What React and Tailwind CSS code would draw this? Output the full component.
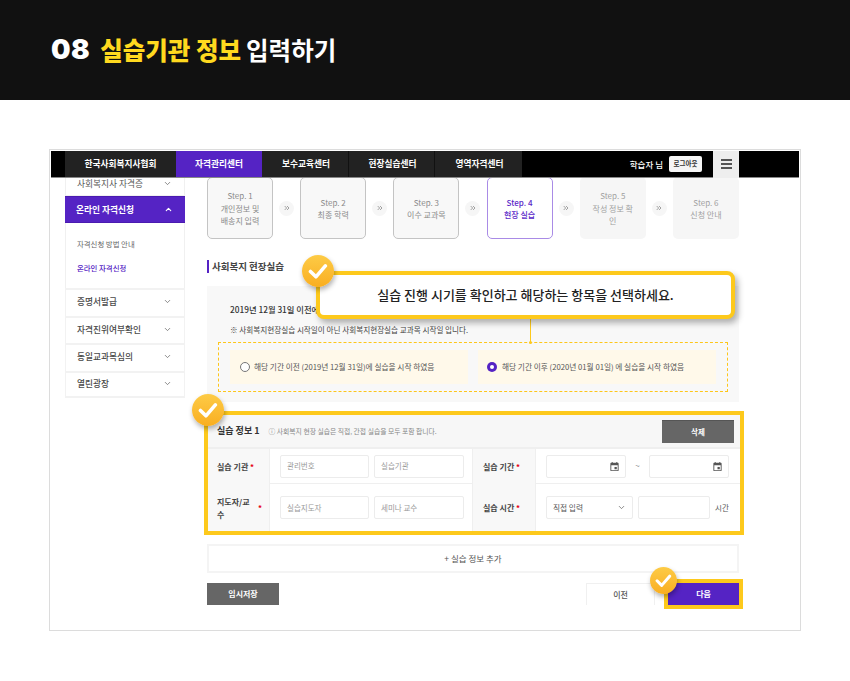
import React from "react";
import { ChevronDown, ChevronUp, ChevronsRight } from "lucide-react";

const navItems = ["한국사회복지사협회", "자격관리센터", "보수교육센터", "현장실습센터", "영역자격센터"];

const steps = [
  { no: "Step. 1", lines: ["개인정보 및", "배송지 입력"], kind: "done" },
  { no: "Step. 2", lines: ["최종 학력"], kind: "done" },
  { no: "Step. 3", lines: ["이수 교과목"], kind: "done" },
  { no: "Step. 4", lines: ["현장 실습"], kind: "active" },
  { no: "Step. 5", lines: ["작성 정보 확", "인"], kind: "todo" },
  { no: "Step. 6", lines: ["신청 안내"], kind: "todo" },
];

const sideItems = ["증명서발급", "자격진위여부확인", "동일교과목심의", "열린광장"];

const CheckBadge = ({ className, size = 32 }) => (
  <div
    className={`absolute z-30 flex items-center justify-center rounded-full bg-gradient-to-b from-[#fdcb45] to-[#f9ae1f] shadow-[1px_3px_5px_rgba(0,0,0,0.3)] ${className}`}
  >
    <svg width={size * 0.62} height={size * 0.62} viewBox="0 0 20 20" fill="none">
      <path d="M2.5 10.5 L8 16 L17.5 5" stroke="#fff" strokeWidth="3.6" strokeLinecap="round" strokeLinejoin="round" />
    </svg>
  </div>
);

const CalendarIcon = () => (
  <svg width="11" height="11" viewBox="0 0 24 24" fill="#555">
    <path d="M19 4h-1V2h-2v2H8V2H6v2H5c-1.1 0-2 .9-2 2v14c0 1.1.9 2 2 2h14c1.1 0 2-.9 2-2V6c0-1.100-.9-2-2-2zm0 16H5V9h14v11z" />
    <rect x="12" y="13" width="5" height="5" />
  </svg>
);

const Field = ({ text, className = "" }) => (
  <div
    className={`h-[23px] border border-[#ececec] rounded-[2px] bg-white flex items-center px-[6px] text-[7.5px] text-[#999] ${className}`}
  >
    {text}
  </div>
);

const Label = ({ children, className = "pl-[9px]" }) => (
  <div className={`bg-[#f8f8f8] border-r border-[#efefef] flex items-center text-[8px] font-bold text-[#444] leading-[13px] ${className}`}>
    {children}
  </div>
);

const Star = ({ className = "" }) => <span className={`text-[#e60012] text-[8px] font-bold ${className}`}>*</span>;

const Step = ({ no, lines, kind }) => {
  const box =
    kind === "done"
      ? "bg-[#f8f8f8] border border-[#c4c4c4] text-[#8a8a8a]"
      : kind === "active"
        ? "bg-white border border-[#a98be6] text-[#5a27c8] font-medium"
        : "bg-[#f6f6f6] text-[#a0a0a0]";
  return (
    <div className={`w-[66px] h-[62px] rounded-[5px] shrink-0 flex flex-col items-center justify-center text-[8px] leading-[12.5px] text-center pt-[2px] ${box}`}>
      <div>{no}</div>
      {lines.map((l) => (
        <div key={l}>{l}</div>
      ))}
    </div>
  );
};

const Arrow = () => (
  <div className="w-[15px] h-[15px] rounded-full bg-[#f6f6f6] flex items-center justify-center shrink-0">
    <ChevronsRight size={8} color="#a0a0a0" strokeWidth={3} />
  </div>
);

export default function App() {
  return (
    <div className="w-[850px] h-[681px] bg-white overflow-hidden font-['Noto_Sans_CJK_KR','Noto_Sans',sans-serif]">
      <header className="h-[100px] bg-[#111111] flex items-center pl-[51px] text-[24.5px] font-bold text-white">
        <span className="font-['Inter',sans-serif] font-black text-[27.5px] tracking-[0.5px] mr-[10px]">08</span>
        <span className="text-[#ffd91f] font-black mr-[5px]">실습기관 정보</span>
        <span>입력하기</span>
      </header>

      <div className="pt-[49px] pl-[49px]">
        <div className="relative w-[752px] h-[482px] border border-[#dcdcdc] p-px overflow-hidden">
          {/* top bar */}
          <div className="relative z-10 h-[27px] bg-black flex items-center text-[8.7px] font-bold text-white border-b border-[#888]">
            <div className="w-[14px]" />
            <div className="w-[111px] h-full bg-[#222] flex items-center justify-center">{navItems[0]}</div>
            <div className="w-[86px] h-full bg-[#5523c4] flex items-center justify-center">{navItems[1]}</div>
            <div className="w-[87px] h-full bg-[#222] border-r border-[#111] flex items-center justify-center pl-[2px]">{navItems[2]}</div>
            <div className="w-[86px] h-full bg-[#222] border-r border-[#111] flex items-center justify-center pl-[2px]">{navItems[3]}</div>
            <div className="w-[87px] h-full bg-[#222] flex items-center justify-center pl-[2px]">{navItems[4]}</div>
            <div className="ml-auto flex items-center h-full mr-[60px]">
              <span className="text-[8.5px] font-medium">학습자 님</span>
              <span className="ml-[6px] w-[33px] h-[16px] bg-[#f5f5f5] rounded-[2px] text-[#333] text-[6.5px] flex items-center justify-center">로그아웃</span>
              <div className="ml-[11px] w-[26px] h-[27px] bg-[#eeeeee] flex flex-col items-center justify-center gap-[2.5px]">
                <div className="w-[11px] h-[1.5px] bg-[#555]" />
                <div className="w-[11px] h-[1.5px] bg-[#555]" />
                <div className="w-[11px] h-[1.5px] bg-[#555]" />
              </div>
            </div>
          </div>

          <div className="flex pl-[14px]">
            {/* side menu */}
            <aside className="w-[120px] shrink-0 -mt-[4px]">
              <div className="border-x border-b border-[#f0f0f0] h-[22px] flex items-center justify-between pl-[11px] pr-[12px] pb-[2px] text-[8.7px] text-[#555]">
                <span>사회복지사 자격증</span>
                <ChevronDown size={9} color="#666" />
              </div>
              <div className="h-[27px] bg-[#5523c4] border-y border-[#4a1bb0] flex items-center justify-between pl-[11px] pr-[12px] text-[8.7px] font-bold text-white">
                <span>온라인 자격신청</span>
                <ChevronUp size={9} color="#fff" strokeWidth={3} />
              </div>
              <div className="h-[65px] border-x border-[#f0f0f0] flex flex-col justify-center gap-[13px] pl-[11px] text-[7.4px]">
                <div className="text-[#666]">자격신청 방법 안내</div>
                <div className="text-[#5523c4] font-medium">온라인 자격신청</div>
              </div>
              {sideItems.map((s) => (
                <div
                  key={s}
                  className="h-[27.500px] border-x border-t-2 border-[#f2f2f2] last:border-b-2 flex items-center justify-between pl-[11px] pr-[12px] pb-[2px] text-[8.700px] font-medium text-[#4a4a4a]"
                >
                  <span>{s}</span>
                  <ChevronDown size={9} color="#666" />
                </div>
              ))}
            </aside>

            {/* main column */}
            <main className="ml-[22px] w-[532px] shrink-0">
              <div className="flex items-center justify-between -mt-[1px]">
                {steps.map((s, i) => (
                  <React.Fragment key={s.no}>
                    <Step {...s} />
                    {i < steps.length - 1 && <Arrow />}
                  </React.Fragment>
                ))}
              </div>

              <div className="mt-[21px] h-[13px] flex items-center border-l-2 border-[#5523c4] pl-[3px] text-[9.500px] font-bold text-[#444] leading-none">
                사회복지 현장실습
              </div>

              <div className="mt-[13px] h-[116px] bg-[#f8f8f8] px-[11px] pt-[16px]">
                <div className="pl-[12px] text-[8.300px] font-medium text-[#333] leading-[14px]">2019년 12월 31일 이전에 현장실습을 시작하셨나요?</div>
                <div className="pl-[12px] mt-[7px] text-[7.600px] text-[#444] leading-[14px]">※ 사회복지현장실습 시작일이 아닌 사회복지현장실습 교과목 시작일 입니다.</div>
                <div className="mt-[5px] h-[50px] border border-dashed border-[#fdc61a] flex items-center gap-[10px] px-[11px]">
                  <div className="w-[238px] h-[34px] bg-[#fff9ea] flex items-center pl-[10px] text-[7.700px] text-[#555]">
                    <span className="w-[10px] h-[10px] rounded-full border border-[#777] bg-white mr-[4px] shrink-0" />
                    해당 기간 이전 (2019년 12월 31일)에 실습을 시작 하였음
                  </div>
                  <div className="w-[238px] h-[34px] bg-[#fff9ea] flex items-center pl-[9px] text-[7.700px] text-[#555]">
                    <span className="w-[10px] h-[10px] rounded-full bg-[#5523c4] mr-[5px] shrink-0 flex items-center justify-center">
                      <span className="w-[4px] h-[4px] rounded-full bg-white" />
                    </span>
                    해당 기간 이후 (2020년 01월 01일) 에 실습을 시작 하였음
                  </div>
                </div>
              </div>

              {/* internship info */}
              <div className="mt-[9px] -ml-[3px] w-[540px] h-[124px] border-4 border-[#fdc91c] bg-white">
                <div className="h-[34px] bg-[#f7f7f7] border-b-2 border-[#efefef] flex items-center pl-[9px] pr-[6px]">
                  <span className="text-[9px] font-bold text-[#333]">실습 정보 1</span>
                  <span className="ml-[9px] text-[6.800px] text-[#888]">ⓘ 사회복지 현장 실습은 직접, 간접 실습을 모두 포함 합니다.</span>
                  <div className="ml-auto w-[72px] h-[23px] bg-[#666] border-t border-[#555] text-white text-[7.500px] font-bold flex items-center justify-center">삭제</div>
                </div>
                <div className="grid grid-cols-[62px_203px_63px_1fr] grid-rows-[35px_1fr] h-[82px]">
                  <Label>
                    실습 기관&nbsp;<Star />
                  </Label>
                  <div className="flex items-center gap-[5px] pl-[10px] border-b border-[#efefef] border-r">
                    <Field text="관리번호" className="w-[89px]" />
                    <Field text="실습기관" className="w-[90px]" />
                  </div>
                  <Label className="pl-[10px]">
                    실습 기간&nbsp;<Star />
                  </Label>
                  <div className="flex items-center pl-[10px] border-b border-[#efefef]">
                    <Field className="w-[80px] justify-end pr-[5px]" text={<CalendarIcon />} />
                    <span className="w-[23px] text-center text-[8px] text-[#888]">~</span>
                    <Field className="w-[80px] justify-end pr-[5px]" text={<CalendarIcon />} />
                  </div>
                  <Label>
                    <span className="w-[38px] break-all">지도자/교수</span>
                    <Star className="ml-[3px]" />
                  </Label>
                  <div className="flex items-center gap-[5px] pl-[10px] border-r border-[#efefef]">
                    <Field text="실습지도자" className="w-[89px]" />
                    <Field text="세미나 교수" className="w-[90px]" />
                  </div>
                  <Label className="pl-[10px]">
                    실습 시간&nbsp;<Star />
                  </Label>
                  <div className="flex items-center pl-[10px]">
                    <div className="w-[87px] h-[23px] border border-[#ececec] rounded-[2px] flex items-center justify-between px-[6px] text-[7.700px] text-[#555]">
                      직접 입력
                      <ChevronDown size={9} color="#666" />
                    </div>
                    <Field className="w-[72px] ml-[5px]" text="" />
                    <span className="ml-[5px] text-[7.500px] text-[#555]">시간</span>
                  </div>
                </div>
              </div>

              <div className="mt-[9px] h-[29px] border-2 border-[#f4f4f4] flex items-center justify-center text-[8.500px] text-[#555]">
                + 실습 정보 추가
              </div>

              <div className="mt-[10px] flex items-start">
                <div className="w-[72px] h-[22px] bg-[#666] text-white text-[8px] font-bold flex items-center justify-center">임시저장</div>
                <div className="ml-auto w-[69px] h-[22px] border-x border-t border-[#f0f0f0] text-[#555] text-[8px] font-medium flex items-center justify-center">이전</div>
                <div className="relative ml-[13px] w-[71px] h-[22px] bg-[#5523c4] text-white text-[8px] font-bold flex items-center justify-center outline-[4px] outline-[#fdc91c]">다음</div>
              </div>
            </main>
          </div>

          {/* callout */}
          <div className="absolute z-20 left-[266px] top-[121px] w-[419px] h-[48px] border-4 border-[#fdc91c] rounded-[8px] bg-white shadow-[3px_4px_6px_rgba(0,0,0,0.3)] flex items-center justify-center text-[13px] font-medium text-[#222]">
            실습 진행 시기를 확인하고 해당하는 항목을 선택하세요.
          </div>
          <div className="absolute z-10 left-[480px] top-[169px] w-px h-[24px] bg-[#fdc91c]" />
          <div className="absolute z-10 left-[479px] top-[191px] w-[3px] h-[3px] rounded-full bg-[#fdc91c]" />
          <CheckBadge className="left-[252px] top-[105px] w-[32px] h-[32px]" />
          <CheckBadge className="left-[142px] top-[244px] w-[32px] h-[32px]" />
          <CheckBadge className="left-[600px] top-[417px] w-[27px] h-[27px]" size={27} />
        </div>
      </div>
    </div>
  );
}
